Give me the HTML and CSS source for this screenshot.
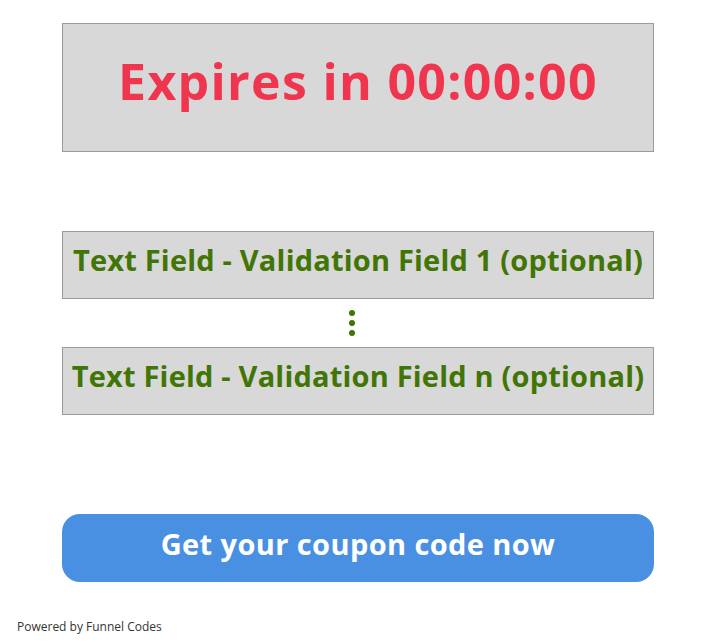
FILE: index.html
```html
<!DOCTYPE html>
<html>
<head>
<meta charset="utf-8">
<link rel="stylesheet" href="styles.css">
</head>
<body>
<main class="page">
  <div class="timer">Expires in 00:00:00</div>
  <div class="fields">
    <div class="field">Text Field - Validation Field 1 (optional)</div>
    <div class="dots"><span></span><span></span><span></span></div>
    <div class="field">Text Field - Validation Field n (optional)</div>
  </div>
  <button class="cta">Get your coupon code now</button>
</main>
<footer class="powered">Powered by Funnel Codes</footer>
</body>
</html>
```
FILE: styles.css
```css
html, body {
  margin: 0;
  padding: 0;
  background: #fff;
}
body {
  font-family: "Open Sans", Lato, sans-serif;
  width: 713px;
  height: 644px;
  position: relative;
}
.page {
  width: 592px;
  margin-left: 62px;
  padding-top: 23px;
  display: flex;
  flex-direction: column;
}
.timer {
  box-sizing: border-box;
  height: 129px;
  border: 1px solid #9b9b9b;
  background: #d8d8d8;
  color: #f0354f;
  font-weight: 700;
  font-size: 50px;
  letter-spacing: 1.3px;
  display: flex;
  align-items: center;
  justify-content: center;
  padding-bottom: 14px;
}
.fields {
  margin-top: 79px;
  display: flex;
  flex-direction: column;
}
.field {
  box-sizing: border-box;
  height: 68px;
  border: 1px solid #9b9b9b;
  background: #d8d8d8;
  color: #417505;
  font-weight: 700;
  font-size: 29px;
  letter-spacing: 0.2px;
  display: flex;
  align-items: center;
  justify-content: center;
  padding-bottom: 11px;
  white-space: nowrap;
}
.dots {
  height: 48px;
  display: flex;
  flex-direction: column;
  align-items: center;
  justify-content: center;
  gap: 4px;
  padding-right: 12px;
}
.dots span {
  width: 6px;
  height: 6px;
  border-radius: 50%;
  background: #417505;
}
.cta {
  margin-top: 99px;
  height: 68px;
  border: none;
  border-radius: 18px;
  background: #4a90e2;
  color: #fff;
  font-family: "Open Sans", Lato, sans-serif;
  font-weight: 700;
  font-size: 29px;
  letter-spacing: 0.4px;
  padding: 0 0 10px;
}
.powered {
  position: absolute;
  left: 17px;
  top: 618px;
  font-size: 12px;
  color: #333;
}
```
